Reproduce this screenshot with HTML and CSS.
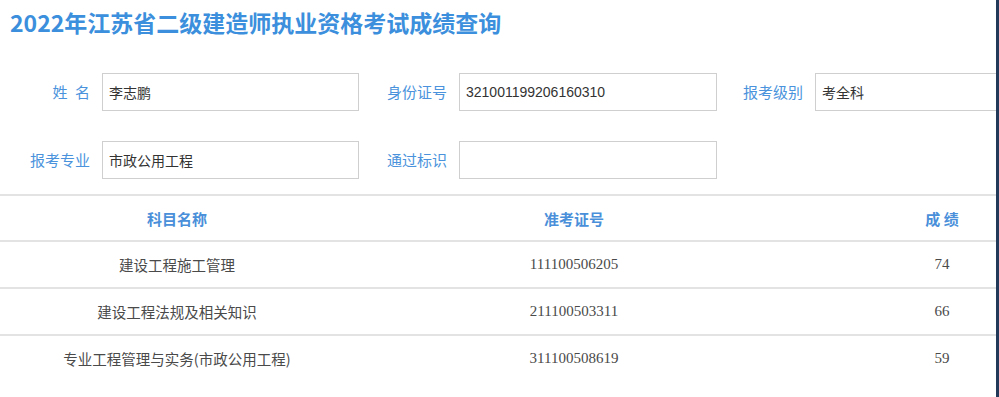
FILE: index.html
```html
<!DOCTYPE html>
<html lang="zh-CN">
<head>
    <meta charset="UTF-8">
    <meta name="viewport" content="width=device-width, initial-scale=1.0">
    <title>成绩查询</title>
    <link rel="stylesheet" href="styles.css">
</head>
<body>
    <div class="frame">
        <div class="page">
            <h1>2022年江苏省二级建造师执业资格考试成绩查询</h1>

            <div class="info">
                <label>姓&ensp;名</label>
                <input type="text" value="李志鹏" readonly>
                <label>身份证号</label>
                <input type="text" value="321001199206160310" readonly>
                <label>报考级别</label>
                <input type="text" value="考全科" readonly>

                <label>报考专业</label>
                <input type="text" value="市政公用工程" readonly>
                <label>通过标识</label>
                <input type="text" value="" readonly>
            </div>

            <table class="scores">
                <colgroup>
                    <col class="col-name">
                    <col class="col-no">
                    <col class="col-score">
                </colgroup>
                <thead>
                    <tr>
                        <th>科目名称</th>
                        <th>准考证号</th>
                        <th>成&nbsp;绩</th>
                    </tr>
                </thead>
                <tbody>
                    <tr>
                        <td>建设工程施工管理</td>
                        <td>111100506205</td>
                        <td>74</td>
                    </tr>
                    <tr>
                        <td>建设工程法规及相关知识</td>
                        <td>211100503311</td>
                        <td>66</td>
                    </tr>
                    <tr>
                        <td>专业工程管理与实务(市政公用工程)</td>
                        <td>311100508619</td>
                        <td>59</td>
                    </tr>
                </tbody>
            </table>
        </div>
        <div class="edge"></div>
    </div>
</body>
</html>
```

FILE: styles.css
```css
html, body {
    margin: 0;
    padding: 0;
    overflow: hidden;
}

body {
    font-family: "Liberation Sans", "Noto Sans CJK SC", sans-serif;
    background-color: #fff;
}

.frame {
    display: flex;
    width: 999px;
    height: 397px;
}

.page {
    width: 996px;
    overflow: hidden;
}

.edge {
    width: 3px;
    background-color: #22395a;
}

h1 {
    margin: 0;
    padding: 6px 0 0 10px;
    height: 40px;
    font-family: "Noto Sans CJK SC", sans-serif;
    font-size: 23px;
    line-height: 32px;
    font-weight: bold;
    color: #3b8fdc;
    white-space: nowrap;
}

.info {
    display: grid;
    grid-template-columns: 90px 257px 76px 258px 74px 260px;
    column-gap: 12px;
    row-gap: 30px;
    margin-top: 27px;
    width: 1100px;
}

.info label {
    font-family: "Noto Sans CJK SC", sans-serif;
    font-size: 15px;
    color: #4a93dc;
    text-align: right;
    line-height: 38px;
    white-space: nowrap;
}

.info input {
    box-sizing: border-box;
    height: 38px;
    width: 100%;
    margin: 0;
    padding: 0 6px;
    border: 1px solid #cfcfcf;
    font-family: "Liberation Sans", "Noto Sans CJK SC", sans-serif;
    font-size: 14px;
    color: #333;
    background-color: #fff;
    outline: none;
}

.scores {
    margin-top: 15px;
    border-collapse: collapse;
    width: 1090px;
    table-layout: fixed;
}

.col-name {
    width: 354px;
}

.col-no {
    width: 440px;
}

.col-score {
    width: 296px;
}

.scores th {
    height: 44px;
    border-top: 2px solid #e3e3e3;
    font-family: "Noto Sans CJK SC", sans-serif;
    font-size: 15px;
    font-weight: bold;
    color: #4a8fd9;
    text-align: center;
    padding: 0;
}

.scores td {
    height: 45px;
    border-top: 2px solid #e3e3e3;
    font-family: "Liberation Serif", "Noto Sans CJK SC", serif;
    font-size: 15px;
    color: #4a4a4a;
    text-align: center;
    padding: 0;
}

.scores td:first-child {
    font-family: "Noto Sans CJK SC", sans-serif;
    font-size: 14.5px;
}
```
